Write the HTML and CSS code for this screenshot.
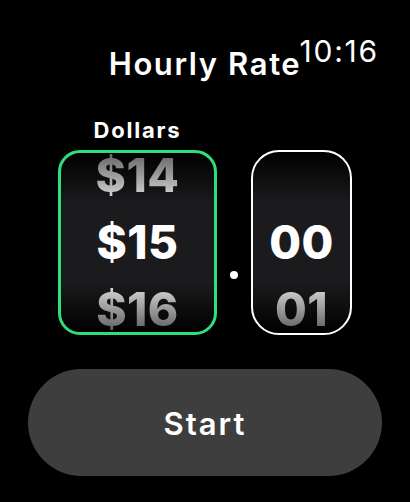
FILE: index.html
```html
<!DOCTYPE html>
<html lang="en">
<head>
    <meta charset="UTF-8">
    <meta name="viewport" content="width=device-width, initial-scale=1.0">
    <title>Hourly Rate</title>
    <link rel="stylesheet" href="styles.css">
</head>
<body>
    <div class="screen">
        <div class="clock">10:16</div>
        <h1 class="title">Hourly Rate</h1>

        <!-- Rate pickers: dollars and cents -->
        <div class="pickers">
            <div class="picker-col">
                <div class="picker-label">Dollars</div>
                <div class="wheel wheel-dollars active">
                    <div class="wheel-items">
                        <div class="item faded-top">$14</div>
                        <div class="item selected">$15</div>
                        <div class="item faded-bottom">$16</div>
                    </div>
                </div>
            </div>
            <div class="decimal"></div>
            <div class="picker-col">
                <div class="picker-label">&nbsp;</div>
                <div class="wheel wheel-cents">
                    <div class="wheel-items">
                        <div class="item empty">&nbsp;</div>
                        <div class="item selected">00</div>
                        <div class="item faded-bottom">01</div>
                    </div>
                </div>
            </div>
        </div>

        <button class="start-btn">Start</button>
    </div>
</body>
</html>
```

FILE: styles.css
```css
html, body {
    margin: 0;
    background: #000;
}
body {
    font-family: Inter, "Noto Sans", sans-serif;
    color: #fff;
}
.screen {
    position: relative;
    width: 410px;
    height: 502px;
    overflow: hidden;
    display: flex;
    flex-direction: column;
    align-items: center;
}
.clock {
    position: absolute;
    top: 33px;
    right: 31px;
    font-size: 30px;
    line-height: 36px;
    font-weight: 400;
    letter-spacing: 1.8px;
}
.title {
    margin: 45px 0 0;
    font-size: 31px;
    line-height: 38px;
    font-weight: 600;
    letter-spacing: 1.6px;
}
.pickers {
    display: flex;
    align-items: flex-end;
    margin-top: 34px;
}
.picker-col {
    display: flex;
    flex-direction: column;
    align-items: center;
}
.picker-label {
    font-size: 22px;
    line-height: 26px;
    font-weight: 700;
    letter-spacing: 1.8px;
    margin-bottom: 7px;
}
.wheel {
    box-sizing: border-box;
    height: 185px;
    border: 2px solid #fff;
    border-radius: 28px;
    background: linear-gradient(#000 0%, #1b1b1d 28%, #1b1b1d 72%, #000 100%);
    overflow: hidden;
    display: flex;
    align-items: center;
    justify-content: center;
}
.wheel.active {
    border: 3px solid #2fe07a;
    border-radius: 22px;
}
.wheel-dollars { width: 159px; }
.wheel-cents { width: 101px; }
.wheel-items {
    display: flex;
    flex-direction: column;
    align-items: center;
}
.item {
    font-size: 46px;
    line-height: 67px;
    font-weight: 800;
    letter-spacing: 0.5px;
}
.faded-top {
    background: linear-gradient(#6a6a6a 20%, #cfcfcf 80%);
    -webkit-background-clip: text;
    background-clip: text;
    color: transparent;
}
.faded-bottom {
    background: linear-gradient(#cfcfcf 20%, #5a5a5a 85%);
    -webkit-background-clip: text;
    background-clip: text;
    color: transparent;
}
.decimal {
    width: 8px;
    height: 8px;
    border-radius: 50%;
    background: #fff;
    margin: 0 13px 56px;
}
.start-btn {
    margin-top: 34px;
    width: 354px;
    height: 107px;
    padding-top: 3px;
    border: none;
    border-radius: 54px;
    background: #3e3e3e;
    color: #fff;
    font-family: Inter, "Noto Sans", sans-serif;
    font-size: 31px;
    font-weight: 600;
    letter-spacing: 2px;
    cursor: pointer;
}
```
